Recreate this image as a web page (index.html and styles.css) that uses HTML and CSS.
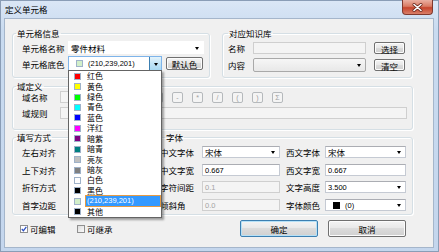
FILE: index.html
```html
<!DOCTYPE html>
<html lang="zh-CN">
<head>
  <meta charset="UTF-8">
  <title>定义单元格</title>
  <link rel="stylesheet" href="styles.css">
</head>
<body>
  <div class="window">
    <div class="titlebar">
      <span class="title">定义单元格</span>
      <span class="close">
        <svg width="11" height="9" viewBox="0 0 11 9">
          <path d="M2 1.5 L9 7.5 M9 1.5 L2 7.5" stroke="#6b2a20" stroke-width="3" stroke-linecap="round"/>
          <path d="M2 1.5 L9 7.5 M9 1.5 L2 7.5" stroke="#fff" stroke-width="1.6" stroke-linecap="round"/>
        </svg>
      </span>
    </div>

    <div class="client">
      <div class="row">
        <fieldset class="group cell-info">
          <legend>单元格信息</legend>
          <div class="line first">
            <label class="lbl w46">单元格名称</label>
            <div class="combo flat w136">零件材料<i class="arrow"></i></div>
          </div>
          <div class="line second">
            <label class="lbl w46">单元格底色</label>
            <div class="combo color-combo">
              <span class="swatch c-custom"></span><span class="num">(210,239,201)</span>
              <span class="dropbtn"><i class="arrow"></i></span>
              <ul class="droplist">
                <li><span class="swatch c-red"></span><span class="txt">红色</span></li>
                <li><span class="swatch c-yellow"></span><span class="txt">黄色</span></li>
                <li><span class="swatch c-green"></span><span class="txt">绿色</span></li>
                <li><span class="swatch c-cyan"></span><span class="txt">青色</span></li>
                <li><span class="swatch c-blue"></span><span class="txt">蓝色</span></li>
                <li><span class="swatch c-magenta"></span><span class="txt">洋红</span></li>
                <li><span class="swatch c-purple"></span><span class="txt">暗紫</span></li>
                <li><span class="swatch c-teal"></span><span class="txt">暗青</span></li>
                <li><span class="swatch c-silver"></span><span class="txt">亮灰</span></li>
                <li><span class="swatch c-gray"></span><span class="txt">暗灰</span></li>
                <li><span class="swatch c-white"></span><span class="txt">白色</span></li>
                <li><span class="swatch c-black"></span><span class="txt">黑色</span></li>
                <li class="sel"><span class="swatch c-custom"></span><span class="txt num">(210,239,201)</span></li>
                <li><span class="swatch c-black"></span><span class="txt">其他</span></li>
              </ul>
            </div>
            <button class="btn default-color">默认色</button>
          </div>
        </fieldset>

        <fieldset class="group kb">
          <legend>对应知识库</legend>
          <div class="line first">
            <label class="lbl w25">名称</label>
            <div class="input disabled w113"></div>
            <button class="btn small">选择</button>
          </div>
          <div class="line second">
            <label class="lbl w25">内容</label>
            <div class="combo readonly w113"><i class="arrow"></i></div>
            <button class="btn small">清空</button>
          </div>
        </fieldset>
      </div>

      <fieldset class="group domain">
        <legend>域定义</legend>
        <div class="line first">
          <label class="lbl w38">域名称</label>
          <div class="input disabled w85"></div>
          <div class="ops">
            <span class="op">+</span>
            <span class="op">-</span>
            <span class="op">*</span>
            <span class="op">/</span>
            <span class="op">(</span>
            <span class="op">)</span>
            <span class="op">Σ</span>
          </div>
        </div>
        <div class="line second">
          <label class="lbl w38">域规则</label>
          <div class="input disabled w347"></div>
        </div>
      </fieldset>

      <div class="row mid">
        <fieldset class="group fill">
          <legend>填写方式</legend>
          <div class="line r1"><label class="lbl w46">左右对齐</label><div class="combo w70"><i class="arrow"></i></div></div>
          <div class="line r2"><label class="lbl w46">上下对齐</label><div class="combo w70"><i class="arrow"></i></div></div>
          <div class="line r3"><label class="lbl w46">折行方式</label><div class="combo w70"><i class="arrow"></i></div></div>
          <div class="line r4"><label class="lbl w46">首字边距</label><div class="input w70"></div></div>
        </fieldset>

        <fieldset class="group font">
          <legend>字体</legend>
          <div class="line r1">
            <label class="lbl w42">中文字体</label>
            <div class="combo w78">宋体<i class="arrow"></i></div>
            <label class="lbl w39 gap">西文字体</label>
            <div class="combo w81">宋体<i class="arrow"></i></div>
          </div>
          <div class="line r2">
            <label class="lbl w42">中文字宽</label>
            <div class="input w78 num">0.667</div>
            <label class="lbl w39 gap">西文字宽</label>
            <div class="input w81 num">0.667</div>
          </div>
          <div class="line r3">
            <label class="lbl w42">字符间距</label>
            <div class="input disabled w78 num">0.1</div>
            <label class="lbl w39 gap">文字高度</label>
            <div class="combo w81 num">3.500<i class="arrow"></i></div>
          </div>
          <div class="line r4">
            <label class="lbl w42">倾斜角</label>
            <div class="input disabled w78 num">0.0</div>
            <label class="lbl w39 gap">字体颜色</label>
            <div class="combo w81 num"><span class="swatch c-black big"></span>(0)<i class="arrow"></i></div>
          </div>
        </fieldset>
      </div>

      <div class="footer">
        <label class="check editable"><span class="box checked">
          <svg width="6" height="6" viewBox="0 0 6 6"><path d="M0.8 3 L2.4 4.8 L5.3 0.8" fill="none" stroke="#2a4ec2" stroke-width="1.3"/></svg>
        </span>可编辑</label>
        <label class="check"><span class="box"></span>可继承</label>
        <div class="actions">
          <button class="btn big primary">确定</button>
          <button class="btn big">取消</button>
        </div>
      </div>
    </div>
  </div>
</body>
</html>
```

FILE: styles.css
```css
* {
  box-sizing: border-box;
}
body {
  margin: 0;
  font-family: "Noto Sans CJK SC", "Liberation Sans", sans-serif;
  font-size: 8.5px;
  color: #000;
  background: #c6d8ee;
}
.window {
  width: 439px;
  height: 252px;
  background: linear-gradient(#dbe7f6, #c9dbf0 30px, #c4d6ed);
  box-shadow: inset 0 0 0 1px #8a9db6;
}
.titlebar {
  height: 19px;
  display: flex;
  justify-content: space-between;
  align-items: flex-start;
  padding-left: 5px;
}
.title {
  line-height: 19px;
}
.close {
  width: 31px;
  height: 15px;
  margin-right: 6px;
  display: flex;
  align-items: center;
  justify-content: center;
  background: linear-gradient(#eab0a2, #d97a63 45%, #c6442c 55%, #d9806a);
  border: 1px solid #80392e;
  border-top: none;
  border-radius: 0 0 4px 4px;
}
.client {
  margin-left: 5px;
  width: 428px;
  height: 228px;
  background: #f0f0f0;
  box-shadow: 0 0 0 1px #a5b6cb;
  padding: 9px 0 0 7px;
}
.row {
  display: flex;
}

/* group boxes */
.group {
  margin: 0;
  padding: 0;
  min-width: 0;
  border: 1px solid #d5dfe5;
  border-radius: 3px;
  box-shadow: inset 1px 1px 0 #fff, 1px 1px 0 #fff;
}
.group legend {
  padding: 0 1px;
  margin-left: 3px;
  line-height: 10px;
}
.line {
  display: flex;
  align-items: center;
  padding-left: 9px;
}
.lbl {
  flex: none;
  white-space: nowrap;
}
.lbl.gap {
  margin-left: 6px;
}
.w25 { width: 25px; }
.w38 { width: 38px; }
.w39 { width: 39px; }
.w42 { width: 42px; }
.w46 { width: 46px; }
.w70 { width: 70px; }
.w78 { width: 78px; }
.w81 { width: 81px; }
.w85 { width: 85px; }
.w113 { width: 113px; }
.w136 { width: 136px; }
.w347 { width: 347px; }

.num {
  font-family: "Liberation Sans", sans-serif;
  font-size: 7.5px;
}

.cell-info {
  width: 198px;
  height: 50px;
}
.cell-info .first {
  margin-top: 3px;
  height: 13px;
}
.cell-info .second {
  margin-top: 2px;
  height: 15px;
}
.kb {
  width: 190px;
  height: 50px;
  margin-left: 12px;
}
.kb legend {
  margin-left: 5px;
}
.kb .line {
  padding-left: 5px;
}
.kb .first {
  margin-top: 4px;
  height: 12px;
}
.kb .second {
  margin-top: 4px;
  height: 14px;
}
.domain {
  width: 401px;
  height: 49px;
  margin-top: 3px;
}
.domain .first {
  height: 12px;
}
.domain .second {
  margin-top: 4px;
  height: 12px;
}
.mid {
  margin-top: 2px;
}
.fill {
  width: 140px;
  height: 83px;
}
.font {
  width: 258px;
  height: 83px;
  margin-left: 3px;
}
.font legend {
  margin-left: 9px;
}
.font .line {
  padding-left: 4px;
}
.fill .line, .font .line {
  height: 12px;
}
.r1 { margin-top: 4px; }
.r2 { margin-top: 6px; }
.r3 { margin-top: 5px; }
.r4 { margin-top: 6px; }

/* inputs and combos */
.input, .combo {
  flex: none;
  height: 100%;
  position: relative;
  display: flex;
  align-items: center;
  padding-left: 2px;
  background: #fff;
  border: 1px solid #c5cad3;
  border-top-color: #abadb3;
  white-space: nowrap;
}
.input.disabled {
  background: #f4f4f4;
  border-color: #cfcfcf;
  color: #a3a3a3;
}
.combo.flat {
  border-color: #fff;
}
.combo.readonly {
  background: linear-gradient(#f6f6f6, #e8e8e8);
  border-color: #a9a9a9;
  border-radius: 2px;
}
.arrow {
  position: absolute;
  right: 4px;
  top: 50%;
  margin-top: -1px;
  width: 0;
  height: 0;
  border-left: 2.5px solid transparent;
  border-right: 2.5px solid transparent;
  border-top: 3px solid #000;
}
.swatch {
  flex: none;
  width: 7px;
  height: 7px;
  border: 1px solid #9fb2c9;
}
.swatch.big {
  border-color: #000;
  margin: 0 5px 0 5px;
}
.c-red { background: #ff0000; }
.c-yellow { background: #ffff00; }
.c-green { background: #00ff00; }
.c-cyan { background: #00ffff; }
.c-blue { background: #0000ff; }
.c-magenta { background: #ff00ff; }
.c-purple { background: #800080; }
.c-teal { background: #008080; }
.c-silver { background: #c0c0c0; }
.c-gray { background: #808080; }
.c-white { background: #ffffff; }
.c-black { background: #000000; }
.c-custom { background: #d2efc9; }

.color-combo {
  width: 94px;
  border-color: #7eb4ea;
  padding-left: 7px;
}
.color-combo .num {
  margin-left: 5px;
}
.dropbtn {
  position: absolute;
  right: 0;
  top: 0;
  bottom: 0;
  width: 12px;
  background: linear-gradient(#e4f3fb, #c2e4f6 50%, #a9d9f2);
  border-left: 1px solid #3c7fb1;
}
.dropbtn .arrow {
  right: 3px;
}
.droplist {
  position: absolute;
  left: -1px;
  top: 100%;
  width: 94px;
  height: 148px;
  margin: 0;
  padding: 0;
  list-style: none;
  display: flex;
  flex-direction: column;
  background: #fff;
  border: 1px solid #646464;
  box-shadow: 2px 2px 2px rgba(0, 0, 0, 0.35);
  z-index: 10;
}
.droplist li {
  flex: 1;
  display: flex;
  align-items: center;
  padding-left: 5px;
  font-size: 8px;
}
.droplist .txt {
  flex: 1;
  margin: 0 1px 0 5px;
  padding-left: 1px;
  line-height: 10px;
}
.droplist .sel .txt {
  background: #3399ff;
  color: #fff;
  outline: 1px solid #e59a44;
}

/* buttons */
.btn {
  flex: none;
  height: 13px;
  padding: 0;
  font: inherit;
  color: #000;
  background: linear-gradient(#f4f4f4, #e9e9e9 45%, #dcdcdc 50%, #d0d0d0);
  border: 1px solid #707070;
  border-radius: 2px;
  box-shadow: inset 0 0 0 1px #fcfcfc;
}
.default-color {
  width: 37px;
  margin-left: 4px;
}
.btn.small {
  width: 31px;
  height: 12px;
  margin-left: 8px;
}
.ops {
  display: flex;
  gap: 9px;
  margin-left: 7px;
  height: 11px;
}
.op {
  width: 11px;
  height: 11px;
  display: flex;
  align-items: center;
  justify-content: center;
  font-family: "Liberation Sans", sans-serif;
  font-size: 7px;
  color: #a0a0a0;
  background: #f4f4f4;
  border: 1px solid #b5b9bc;
  border-radius: 2px;
}

/* footer */
.footer {
  display: flex;
  align-items: center;
  height: 17px;
  margin-top: 5px;
  padding-left: 8px;
}
.check {
  display: flex;
  align-items: center;
}
.check.editable {
  width: 57px;
}
.box {
  width: 8px;
  height: 8px;
  margin-right: 2px;
  display: flex;
  align-items: center;
  justify-content: center;
  background: linear-gradient(135deg, #dcdcdc, #fbfbfb);
  border: 1px solid #8f8f8f;
}
.box.checked {
  background: #fff;
}
.actions {
  display: flex;
  gap: 10px;
  margin-left: auto;
  margin-right: 27px;
  height: 17px;
}
.btn.big {
  width: 78px;
  height: 17px;
}
.btn.primary {
  border-color: #3c7fb1;
  box-shadow: inset 0 0 0 1px #b6e1f7;
}
```
